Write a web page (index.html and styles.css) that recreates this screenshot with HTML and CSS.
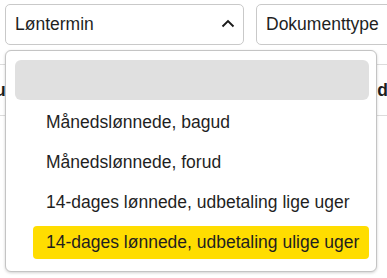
FILE: index.html
```html
<!DOCTYPE html>
<html lang="da">
<head>
<meta charset="utf-8">
<link rel="stylesheet" href="styles.css">
</head>
<body>
<div class="page">
  <div class="filters">
    <div class="select open">
      <span class="label">Løntermin</span>
      <svg class="chev" width="14" height="9" viewBox="0 0 14 9"><path d="M1.5 7.5 L7 2 L12.5 7.5" fill="none" stroke="#1a1a1a" stroke-width="1.9"/></svg>
    </div>
    <div class="select second">
      <span class="label">Dokumenttype</span>
    </div>
  </div>
  <div class="table-head">
    <span class="th left">u</span>
    <span class="th right">d</span>
  </div>
  <div class="menu">
    <div class="empty"></div>
    <ul class="options">
      <li class="option"><span class="opt-inner">Månedslønnede, bagud</span></li>
      <li class="option"><span class="opt-inner">Månedslønnede, forud</span></li>
      <li class="option"><span class="opt-inner">14-dages lønnede, udbetaling lige uger</span></li>
      <li class="option active"><span class="opt-inner">14-dages lønnede, udbetaling ulige uger</span></li>
    </ul>
  </div>
</div>
</body>
</html>
```
FILE: styles.css
```css
* { box-sizing: border-box; }
html, body {
  margin: 0;
  padding: 0;
  background: #fff;
  font-family: "Liberation Sans", Arial, sans-serif;
  color: #1f1f1f;
  overflow: hidden;
}
.page {
  position: relative;
  width: 387px;
  height: 278px;
  padding-top: 4px;
}
.filters {
  display: flex;
  gap: 12px;
  padding-left: 5px;
}
.select {
  height: 41px;
  border: 1px solid #c9c9c9;
  border-radius: 5px;
  display: flex;
  align-items: center;
  padding-left: 9px;
  font-size: 17.5px;
  flex: none;
}
.select.open {
  width: 239px;
  justify-content: space-between;
  padding-right: 8px;
}
.select.second {
  width: 160px;
  padding-left: 9px;
}
.chev { display: block; margin-top: -2px; }
.table-head {
  margin-top: 19px;
  height: 52px;
  border-top: 1px solid #dcdcdc;
  border-bottom: 1px solid #dcdcdc;
  display: flex;
  justify-content: space-between;
  align-items: center;
  font-weight: bold;
  font-size: 17.5px;
}
.th.left { margin-left: -5px; }
.th.right { margin-right: -1px; }
.menu {
  position: absolute;
  left: 5px;
  top: 50px;
  width: 372px;
  height: 222px;
  background: #fff;
  border: 1px solid #c4c4c4;
  border-radius: 6px;
  box-shadow: 0 1px 3px rgba(0,0,0,0.18);
  padding: 9px 7px 9px 9px;
}
.empty {
  height: 40px;
  background: #e0e0e0;
  border-radius: 6px;
}
.options {
  list-style: none;
  margin: 2px 0 0 0;
  padding: 0 0 0 18px;
}
.option {
  height: 40px;
  display: flex;
  align-items: center;
  font-size: 17.5px;
}
.opt-inner {
  flex: 1;
  height: 33px;
  display: flex;
  align-items: center;
  padding-left: 13px;
  border-radius: 4px;
  white-space: nowrap;
}
.option.active .opt-inner {
  background: #ffdd00;
}
```
